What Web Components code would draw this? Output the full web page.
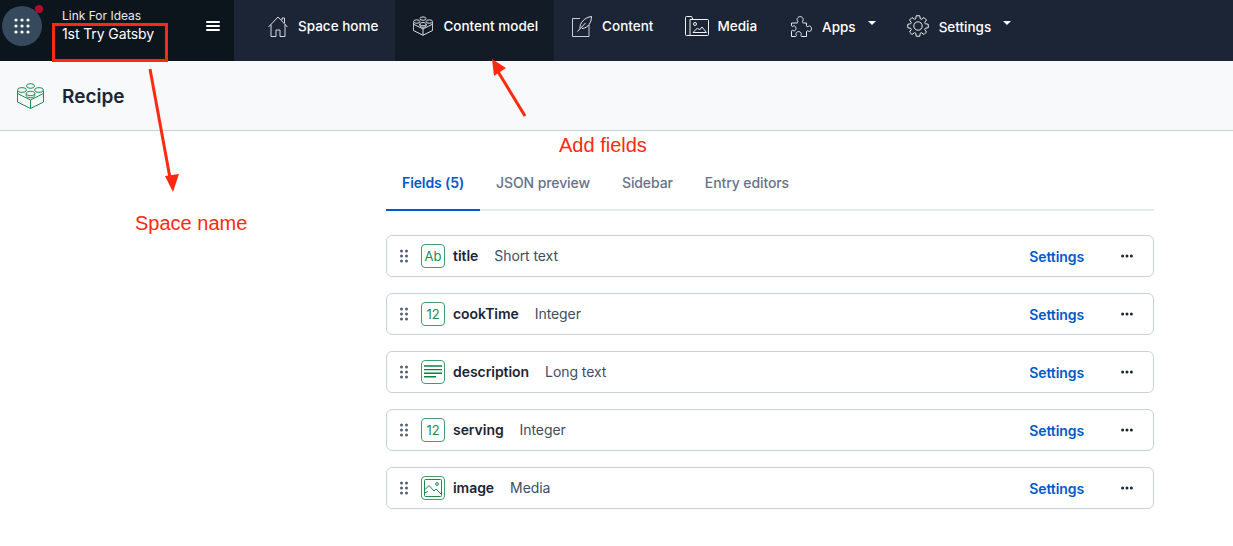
<!DOCTYPE html>
<html>
<head>
<meta charset="utf-8">
<title>Recipe</title>
<style>
  html, body { margin: 0; padding: 0; background: #fff; }
  body { font-family: Inter, "Liberation Sans", sans-serif; position: relative; width: 1233px; height: 546px; overflow: hidden; }
</style>
</head>
<body>
<app-nav></app-nav>
<page-header>Recipe</page-header>
<main-area>
  <field-tabs></field-tabs>
  <field-row name="title" type="Short text" icon="ab"></field-row>
  <field-row name="cookTime" type="Integer" icon="num"></field-row>
  <field-row name="description" type="Long text" icon="lines"></field-row>
  <field-row name="serving" type="Integer" icon="num"></field-row>
  <field-row name="image" type="Media" icon="img"></field-row>
</main-area>
<note-layer></note-layer>

<script>
const brick = (c, w, h, sw) => `<svg width="${w}" height="${h}" viewBox="0 0 27 26" fill="none" stroke="${c}" stroke-width="${sw}">
  <path d="M.5 10.5 L13.5 17 L26.5 10.5 V19 L13.5 25.5 L.5 19 Z M13.5 17 V25.5"/>
  <path d="M.5 10.5 V8 M26.5 10.5 V8"/>
  <ellipse cx="13.5" cy="3" rx="4" ry="2.3"/>
  <ellipse cx="5" cy="7" rx="4.3" ry="2.3"/>
  <ellipse cx="22" cy="7" rx="4.3" ry="2.3"/>
  <path d="M9.2 10.5 C9.2 7.6 17.8 7.6 17.8 10.5 C17.8 13.4 9.2 13.4 9.2 10.5 Z M9.2 10.5 V12.5 C9.2 15.4 17.8 15.4 17.8 12.5 V10.5"/>
</svg>`;

// outline of a cog, 8 teeth
const gearPath = () => {
  const pts = [];
  for (let i = 0; i < 8; i++) {
    const a = (i * Math.PI) / 4;
    [[-0.3, 7.6], [-0.17, 10.4], [0.17, 10.4], [0.3, 7.6]].forEach(([d, r]) => {
      pts.push((11 + r * Math.sin(a + d)).toFixed(2) + " " + (11 - r * Math.cos(a + d)).toFixed(2));
    });
  }
  return "M" + pts.join(" L") + " Z";
};

const navIcons = {
  home: `<svg width="20" height="21" viewBox="0 0 20 21" fill="none" stroke="#d5d9df" stroke-width="1">
    <path d="M.5 11 L10 1 L19.5 11 M3 8.5 V20.5 H8 V14 H12 V20.5 H17 V8.5 M14 4.2 V2 H16.5 V7"/></svg>`,
  model: brick("#e8ebef", 20, 20, 1.25),
  content: `<svg width="20" height="21" viewBox="0 0 20 21" fill="none" stroke="#c9ced6" stroke-width="1">
    <path d="M8 2.5 H.5 V20.5 H17 V9"/><path d="M5.5 15.5 L13.5 7 M8 12.5 C7.5 7 12.5 1.5 19.5 .5 C19.5 6 16.5 12 10 12.5" stroke="#e8ebef"/></svg>`,
  media: `<svg width="24" height="20" viewBox="0 0 24 20" fill="none" stroke="#f0f2f5" stroke-width="1">
    <path d="M5 19.5 H1.5 Q.5 19.5 .5 18.5 V1.5 Q.5 .5 1.5 .5 H6.5 L8 3.5 H5 V19.5 H22.5 Q23.5 19.5 23.5 18.5 V4.5 Q23.5 3.5 22.5 3.5 H8"/>
    <circle cx="10" cy="8" r="1.5"/><path d="M8 16.5 L12.5 12 L14.5 14 L17 11 L21.5 16.5 Z"/></svg>`,
  apps: `<svg width="21" height="21" viewBox="0 0 21 21" fill="none" stroke="#e8ebef" stroke-width="1">
    <path d="M.5 7 H6 C7 7 7 5.6 6.5 5 C5.3 3.2 6.8 .6 9.2 .6 C11.6 .6 13 3.2 11.8 5 C11.3 5.6 11.3 7 12.3 7 H15.5 V9.8 C15.5 10.8 16.9 10.8 17.4 10.3 C18.8 9.2 20.5 10.8 20.5 12.8 C20.5 14.8 18.8 16.2 17.4 15.2 C16.9 14.7 15.5 14.7 15.5 15.7 V20.5 H10.8 C9.8 20.5 9.8 19.2 10.2 18.6 C10.8 17.2 9.4 15.6 7.6 15.6 C5.8 15.6 4.6 17.2 5.1 18.6 C5.5 19.2 5.5 20.5 4.5 20.5 H.5 V15.2 C.5 14.2 1.9 14.2 2.4 14.7 C3.8 15.4 5 14 5 12.4 C5 10.8 3.8 9.4 2.4 10 C1.9 10.5 .5 10.5 .5 9.5 Z"/></svg>`,
  settings: `<svg width="22" height="22" viewBox="0 0 22 22" fill="none" stroke="#eceef1" stroke-width="1">
    <circle cx="11" cy="11" r="4.2"/><path d="${gearPath()}"/></svg>`
};

class AppNav extends HTMLElement {
  constructor() {
    super();
    this.attachShadow({ mode: "open" });
  }

  item(icon, label, opts = {}) {
    return `<a class="item ${opts.active ? "active" : ""}" style="gap:${opts.gap || 10}px;padding-left:${opts.pad || 18}px;padding-right:${opts.end || 16}px">
      <span class="ic">${navIcons[icon]}</span><span class="lb" style="margin-top:${opts.low ? 2 : 0}px">${label}</span>
      ${opts.caret ? '<i class="caret"></i>' : ""}
    </a>`;
  }

  connectedCallback() {
    this.shadowRoot.innerHTML = `
    <style>
      :host { display: flex; height: 61px; background: #1b2536; color: #fff; font-size: 13.5px; font-weight: 500; }
      .space { width: 234px; flex: none; background: #0c141c; display: flex; align-items: flex-start; box-sizing: border-box; padding-left: 2px; position: relative; }
      .dots { position: relative; width: 40px; height: 40px; border-radius: 50%; background: #364a5e; margin-top: 6px; display: grid; place-items: center; flex: none; }
      .dots::after { content: ""; position: absolute; top: -1px; right: -1px; width: 8px; height: 8px; border-radius: 50%; background: #b5082f; }
      .names { margin-left: 20px; padding-top: 9px; }
      .org { font-size: 12px; font-weight: 400; line-height: 14px; color: #e8ebef; }
      .name { font-size: 14px; letter-spacing: -0.1px; font-weight: 400; line-height: 20px; margin-top: 1px; }
      .burger { position: absolute; left: 206px; top: 21px; }
      .items { display: flex; padding-left: 16px; }
      .item { display: flex; align-items: center; padding-bottom: 9px; height: 61px; box-sizing: border-box; white-space: nowrap; }
      .item.active { background: #131b27; }
      .ic { display: flex; }
      .caret { width: 0; height: 0; border-left: 4.5px solid transparent; border-right: 4.5px solid transparent; border-top: 4px solid #fff; margin: -7px 0 0 2px; }
    </style>
    <div class="space">
      <div class="dots">
        <svg width="16" height="16" viewBox="0 0 16 16" fill="#fff">
          <circle cx="2" cy="2" r="1.6"/><circle cx="8" cy="2" r="1.6"/><circle cx="14" cy="2" r="1.6"/>
          <circle cx="2" cy="8" r="1.6"/><circle cx="8" cy="8" r="1.6"/><circle cx="14" cy="8" r="1.6"/>
          <circle cx="2" cy="14" r="1.6"/><circle cx="8" cy="14" r="1.6"/><circle cx="14" cy="14" r="1.6"/>
        </svg>
      </div>
      <div class="names"><div class="org">Link For Ideas</div><div class="name">1st Try Gatsby</div></div>
      <svg class="burger" width="14" height="10" viewBox="0 0 14 10" fill="#fff"><rect width="14" height="2" rx="1"/><rect y="4" width="14" height="2" rx="1"/><rect y="8" width="14" height="2" rx="1"/></svg>
    </div>
    <nav class="items">
      ${this.item("home", "Space home", { pad: 18, end: 17 })}
      ${this.item("model", "Content model", { active: true, pad: 18 })}
      ${this.item("content", "Content", { pad: 18 })}
      ${this.item("media", "Media", { pad: 16, gap: 8 })}
      ${this.item("apps", "Apps", { pad: 18, caret: true, low: true })}
      ${this.item("settings", "Settings", { pad: 15, caret: true, low: true })}
    </nav>`;
  }
}

class PageHeader extends HTMLElement {
  constructor() {
    super();
    this.attachShadow({ mode: "open" });
  }

  connectedCallback() {
    this.shadowRoot.innerHTML = `
    <style>
      :host { display: flex; align-items: center; height: 70px; box-sizing: border-box; background: #f7f9fa; border-bottom: 1px solid #c5d2d8; padding-left: 17px; }
      h1 { margin: 2px 0 0 18px; font-size: 19px; font-weight: 600; color: #1b2536; }
      .ic { display: flex; }
    </style>
    <span class="ic">${brick("#1a8a4f", 27, 26, 1)}</span><h1><slot></slot></h1>`;
  }
}

class MainArea extends HTMLElement {
  constructor() {
    super();
    this.attachShadow({ mode: "open" });
  }

  connectedCallback() {
    this.shadowRoot.innerHTML = `
    <style>
      :host { display: flex; flex-direction: column; gap: 16px; width: 768px; margin-left: 386px; padding-top: 31px; }
    </style>
    <slot></slot>`;
  }
}

class FieldTabs extends HTMLElement {
  constructor() {
    super();
    this.attachShadow({ mode: "open" });
  }

  connectedCallback() {
    this.shadowRoot.innerHTML = `
    <style>
      :host { display: flex; height: 49px; box-sizing: border-box; border-bottom: 2px solid #e7ebee; margin-bottom: 8px; font-size: 14px; font-weight: 500; color: #67728a; }
      a { padding: 12px 16px 0; margin-bottom: -2px; border-bottom: 2px solid transparent; white-space: nowrap; line-height: 17px; letter-spacing: -0.1px; }
      a.on { color: #0059c8; border-bottom-color: #0059c8; font-weight: 600; }
    </style>
    <a class="on">Fields (5)</a><a>JSON preview</a><a>Sidebar</a><a>Entry editors</a>`;
  }
}

const fieldIcons = {
  ab: `<span class="txt">Ab</span>`,
  num: `<span class="txt">12</span>`,
  lines: `<svg width="18" height="14" viewBox="0 0 18 14" stroke="#0f7f43" stroke-width="1.4"><path d="M0 1 H18 M0 4.6 H18 M0 8.2 H18 M0 11.8 H12"/></svg>`,
  img: `<svg width="18" height="18" viewBox="0 0 18 18" fill="none" stroke="#1a8a4f" stroke-width="1"><rect x=".5" y=".5" width="17" height="17" rx="1"/><circle cx="13" cy="5" r="1.4"/><path d="M.5 11 L5 6.5 L10 12 L12 10 L17.5 15.5 M.5 14 L4 12.5"/></svg>`
};

class FieldRow extends HTMLElement {
  constructor() {
    super();
    this.attachShadow({ mode: "open" });
  }

  connectedCallback() {
    const name = this.getAttribute("name");
    const type = this.getAttribute("type");
    const icon = this.getAttribute("icon");
    this.shadowRoot.innerHTML = `
    <style>
      :host { display: flex; align-items: center; height: 42px; box-sizing: border-box; border: 1px solid #c5d2d8; border-radius: 6px; font-size: 14px; color: #1b2536; padding-left: 13px; }
      .grip { display: flex; margin-right: 13px; }
      .badge { width: 24px; height: 24px; box-sizing: border-box; border: 1px solid #3f9e6c; border-radius: 4px; display: grid; place-items: center; flex: none; margin-right: 8px; }
      .txt { color: #1a8a4f; font-size: 13px; }
      b { font-weight: 600; margin-top: -2px; letter-spacing: -0.05px; }
      .type { color: #414d63; margin: -2px 0 0 16px; letter-spacing: -0.08px; }
      .settings { margin-left: auto; color: #0059c8; font-weight: 600; letter-spacing: -0.1px; }
      .more { display: flex; margin: 0 20px 0 37px; }
    </style>
    <span class="grip"><svg width="8" height="14" viewBox="0 0 8 14" fill="#555f75">
      <circle cx="1.5" cy="2" r="1.5"/><circle cx="6.5" cy="2" r="1.5"/><circle cx="1.5" cy="7" r="1.5"/><circle cx="6.5" cy="7" r="1.5"/><circle cx="1.5" cy="12" r="1.5"/><circle cx="6.5" cy="12" r="1.5"/>
    </svg></span>
    <span class="badge">${fieldIcons[icon]}</span>
    <b>${name}</b><span class="type">${type}</span>
    <span class="settings">Settings</span>
    <span class="more"><svg width="12" height="4" viewBox="0 0 12 4" fill="#1b2536"><circle cx="1.6" cy="2" r="1.5"/><circle cx="6" cy="2" r="1.5"/><circle cx="10.4" cy="2" r="1.5"/></svg></span>`;
  }
}

// red markup drawn over the screenshot, free canvas
class NoteLayer extends HTMLElement {
  constructor() {
    super();
    this.attachShadow({ mode: "open" });
  }

  connectedCallback() {
    this.shadowRoot.innerHTML = `
    <style>
      :host { position: absolute; inset: 0; pointer-events: none; display: block; font-family: "Liberation Sans", Arial, sans-serif; font-size: 20px; color: #fb2a10; }
      svg { position: absolute; left: 0; top: 0; }
      span { position: absolute; white-space: nowrap; line-height: 24px; }
    </style>
    <svg width="1233" height="546" fill="none" stroke="#fb2a10" stroke-width="3">
      <rect x="53.5" y="24.5" width="113" height="36"/>
      <path d="M150 69 L170 178"/>
      <path d="M173 192 L165 176 L179 174 Z" fill="#fb2a10" stroke="none"/>
      <path d="M525 116 L497 70"/>
      <path d="M492 59 L506 68 L494 76 Z" fill="#fb2a10" stroke="none"/>
    </svg>
    <span style="left:559px;top:133px">Add fields</span>
    <span style="left:135px;top:211px">Space name</span>`;
  }
}

customElements.define("app-nav", AppNav);
customElements.define("page-header", PageHeader);
customElements.define("main-area", MainArea);
customElements.define("field-tabs", FieldTabs);
customElements.define("field-row", FieldRow);
customElements.define("note-layer", NoteLayer);
</script>
</body>
</html>
